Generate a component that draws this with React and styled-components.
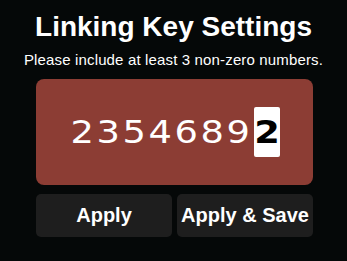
import React from 'react';
import styled, { createGlobalStyle } from 'styled-components';

const GlobalStyle = createGlobalStyle`
  html, body {
    margin: 0;
    padding: 0;
    background-color: #050808;
  }
`;

const Screen = styled.div`
  width: 347px;
  height: 261px;
  box-sizing: border-box;
  padding: 10px 0 0;
  display: flex;
  flex-direction: column;
  align-items: center;
  font-family: "Liberation Sans", Arial, sans-serif;
  color: #ffffff;
  overflow: hidden;
`;

const Title = styled.h1`
  margin: 0;
  font-size: 28px;
  line-height: 34px;
  font-weight: 700;
  white-space: nowrap;
`;

const Hint = styled.p`
  margin: 6px 0 0;
  font-size: 15px;
  line-height: 20px;
  letter-spacing: 0.15px;
  white-space: nowrap;
`;

const KeyPanel = styled.div`
  margin: 9px 0 0 2px;
  width: 277px;
  height: 106px;
  border-radius: 8px;
  background-color: #8c3d34;
  display: flex;
  align-items: center;
  justify-content: center;
  gap: 6px;
  padding-left: 3px;
  box-sizing: border-box;
`;

const Digit = styled.span`
  width: ${p => (p.$active ? '26px' : '20px')};
  height: 50px;
  display: flex;
  align-items: center;
  justify-content: center;
  font-family: "DejaVu Sans", sans-serif;
  font-size: 32px;
  font-weight: ${p => (p.$active ? 700 : 400)};
  color: ${p => (p.$active ? '#000000' : '#ffffff')};
  background-color: ${p => (p.$active ? '#ffffff' : 'transparent')};
  border-radius: 2px;
`;

const Glyph = styled.span`
  display: inline-block;
  transform: scaleX(1.15);
`;

const Actions = styled.div`
  margin: 9px 0 0 2px;
  width: 277px;
  display: grid;
  grid-template-columns: 136px 136px;
  gap: 5px;
`;

const ActionButton = styled.button`
  height: 43px;
  border: none;
  border-radius: 5px;
  background-color: #1e1e1e;
  color: #ffffff;
  font-family: "Liberation Sans", Arial, sans-serif;
  font-size: 20px;
  font-weight: 700;
  padding: 0;
  white-space: nowrap;
  cursor: pointer;
`;

const digits = ['2', '3', '5', '4', '6', '8', '9', '2'];

const App = () => (
  <>
    <GlobalStyle />
    <Screen>
      <Title>Linking Key Settings</Title>
      <Hint>Please include at least 3 non-zero numbers.</Hint>
      <KeyPanel>
        {digits.map((d, i) => (
          <Digit key={i} $active={i === digits.length - 1}>
            <Glyph>{d}</Glyph>
          </Digit>
        ))}
      </KeyPanel>
      <Actions>
        <ActionButton>Apply</ActionButton>
        <ActionButton>Apply &amp; Save</ActionButton>
      </Actions>
    </Screen>
  </>
);

export default App;
